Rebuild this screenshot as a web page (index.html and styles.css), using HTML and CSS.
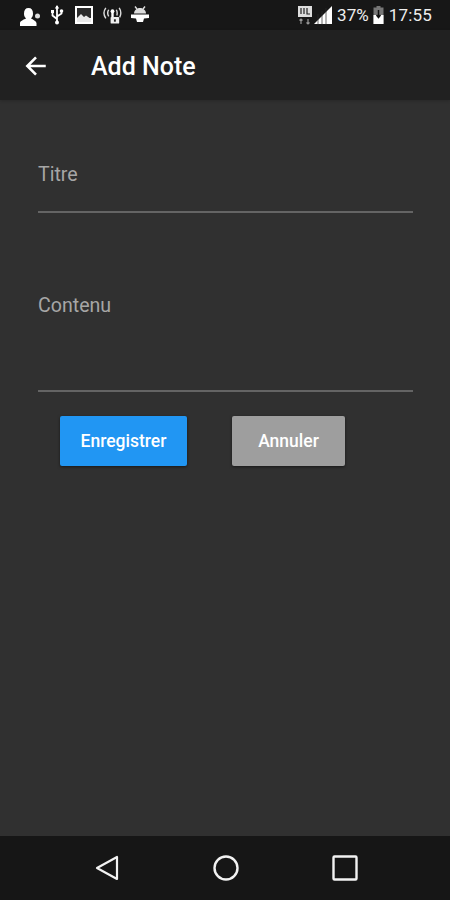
FILE: index.html
```html
<!DOCTYPE html>
<html lang="fr">
<head>
<meta charset="utf-8">
<title>Add Note</title>
<link rel="stylesheet" href="styles.css">
</head>
<body>
<div class="screen">
  <header class="status">
    <div class="status-left">
      <svg class="ic-person" viewBox="0 0 22 20"><path d="M1 19v-3c0-2 4-3.500 6-4.500-1.500-1.500-2-3-2-5C5 3 6.500 1 9.500 1S14 3 14 6.500c0 2-.5 3.500-2 5 2 1 5 2.500 5.500 4.500v3z" fill="#fff"/><circle cx="18.500" cy="9" r="2.500" fill="#ddd"/></svg>
      <svg class="ic-usb" viewBox="0 0 14 20"><path d="M7 1v18M7 14L2.500 10.500V8M7 11.500l4.500-3V6.500" fill="none" stroke="#fff" stroke-width="1.800"/><rect x="1" y="5" width="3" height="3" fill="#fff"/><circle cx="11.500" cy="6" r="1.800" fill="#fff"/><path d="M7 0l2.200 3.500H4.800z" fill="#fff"/><circle cx="7" cy="17.500" r="2" fill="#fff"/></svg>
      <svg class="ic-image" viewBox="0 0 20 20"><rect x="1" y="1" width="18" height="18" fill="#fff"/><rect x="3" y="3" width="14" height="10" fill="#2a2a2a"/><path d="M3 13l4-4 3 3 2-1.500 5 3.500v3H3z" fill="#e8e8e8"/></svg>
      <svg class="ic-hotspot" viewBox="0 0 22 20"><path d="M4 2.500C1.500 6 1.500 10 4 13.500M7 4.500C5.500 7 5.500 9 7 11.500M18 2.500c2 3 2 7 .5 10M15 4.500c1 2 1 4.500 .5 6" fill="none" stroke="#ddd" stroke-width="1.500"/><path d="M11 6v7" stroke="#fff" stroke-width="2.500"/><circle cx="11" cy="6" r="2" fill="#fff"/><rect x="9" y="12" width="9" height="7" rx="1" fill="#eee"/><rect x="12.500" y="14.500" width="2" height="2.500" fill="#222"/></svg>
      <svg class="ic-android" viewBox="0 0 20 20"><path d="M4 8.500c0-3 2.500-5.500 6-5.500s6 2.500 6 5.500z" fill="#ddd"/><path d="M5 1.500l2 2.500M15 1.500l-2 2.500" stroke="#ddd" stroke-width="1.400"/><path d="M1 9.500h18V13l-5 .5-1 3.500H7l-1-3.500-5-.5z" fill="#fff"/></svg>
    </div>
    <div class="status-right">
      <svg class="ic-data" viewBox="0 0 16 20"><rect x="1" y="1" width="14" height="11" fill="#ddd"/><path d="M4 3v6M7 3v6M10 3v6h3" fill="none" stroke="#222" stroke-width="1.200"/><path d="M4 14v5M2.500 15.500L4 14l1.500 1.500M11 14v5M9.500 17.500L11 19l1.500-1.500" fill="none" stroke="#999" stroke-width="1.200"/></svg>
      <svg class="ic-signal" viewBox="0 0 19 20"><path d="M0 19L18 1v18z" fill="#fff"/><path d="M4 9v11M8 6v14M12 3v17" stroke="#2a2a2a" stroke-width=".7"/></svg>
      <span class="pct">37%</span>
      <svg class="ic-battery" viewBox="0 0 12 20"><path d="M4 1h4v1.500h3V19H1V2.500h3z" fill="#777"/><rect x="1" y="10" width="10" height="9" fill="#fff"/><path d="M6 5v7M4 10l2 2.500 2-2.500" fill="none" stroke="#111" stroke-width="1.500"/></svg>
      <span class="clock">17:55</span>
    </div>
  </header>

  <div class="appbar">
    <svg class="back" viewBox="0 0 24 24"><path d="M21 12H4M12 4l-8 8 8 8" fill="none" stroke="#fff" stroke-width="2.400"/></svg>
    <h1 class="title">Add Note</h1>
  </div>

  <main class="content">
    <div class="field field-title"><span class="label">Titre</span></div>
    <div class="field field-body"><span class="label">Contenu</span></div>
    <div class="actions">
      <button class="btn btn-save">Enregistrer</button>
      <button class="btn btn-cancel">Annuler</button>
    </div>
  </main>

  <nav class="navbar">
    <svg class="nav-ic" viewBox="0 0 28 28"><path d="M4 14L24 3v22z" fill="none" stroke="#f2f2f2" stroke-width="2.200" stroke-linejoin="round"/></svg>
    <svg class="nav-ic" viewBox="0 0 28 28"><circle cx="14" cy="14" r="11.500" fill="none" stroke="#f2f2f2" stroke-width="2.400"/></svg>
    <svg class="nav-ic" viewBox="0 0 28 28"><rect x="2.500" y="2.500" width="23" height="23" rx="1" fill="none" stroke="#f2f2f2" stroke-width="2.400"/></svg>
  </nav>
</div>
</body>
</html>
```
FILE: styles.css
```css
* { box-sizing: border-box; }
html, body { margin: 0; padding: 0; }
body { background: #303030; font-family: Roboto, "Liberation Sans", sans-serif; }
.screen { width: 450px; height: 900px; display: flex; flex-direction: column; overflow: hidden; background: #303030; }

.status { height: 30px; flex: none; background: #171717; display: flex; justify-content: space-between; align-items: center; padding: 0 18px 0 19px; color: #eee; }
.status-left, .status-right { display: flex; align-items: center; }
.status svg { display: block; height: 20px; }
.ic-person { width: 22px; margin-top: 3px; }
.ic-usb { width: 14px; margin-left: 9px; }
.ic-image { width: 20px; margin-left: 10px; }
.ic-hotspot { width: 21px; margin-left: 8px; }
.ic-android { width: 20px; margin-left: 7px; }
.ic-data { width: 16px; }
.ic-signal { width: 19px; margin-left: 1px; }
.pct { font-size: 17px; margin-left: 4px; }
.ic-battery { width: 13px; margin-left: 3px; }
.clock { font-size: 17px; margin-left: 4px; letter-spacing: .2px; }

.appbar { height: 70px; flex: none; background: #212121; display: flex; align-items: center; padding: 2px 0 0 23px; box-shadow: 0 1px 3px rgba(0,0,0,.2); }
.back { width: 26px; height: 26px; display: block; }
.title { margin: 0 0 0 42px; font-size: 25px; font-weight: 500; color: #fff; }

.content { flex: 1; padding: 0 37px 0 38px; }
.field { border-bottom: 2px solid #646464; color: #a6a6a6; font-size: 19.600px; line-height: 24px; }
.field-title { padding-top: 63px; height: 113px; }
.field-body { margin-top: 81px; height: 98px; }
.label { display: block; }

.actions { display: flex; margin-top: 24px; padding-left: 22px; }
.btn { height: 50px; border: 0; border-radius: 2px; color: #fff; font: 500 17.500px Roboto, "Liberation Sans", sans-serif; box-shadow: 0 1px 3px rgba(0,0,0,.5); padding: 0; }
.btn-save { width: 127px; background: #2196f3; }
.btn-cancel { width: 113px; margin-left: 45px; background: #9e9e9e; }

.navbar { height: 64px; flex: none; background: #161616; display: flex; justify-content: center; gap: 91px; align-items: center; padding-left: 1px; }
.nav-ic { width: 28px; height: 28px; display: block; }
```
